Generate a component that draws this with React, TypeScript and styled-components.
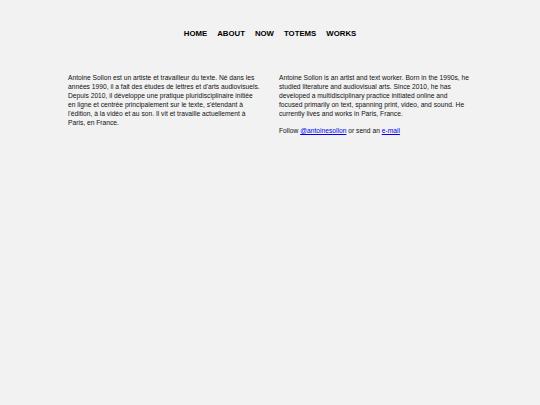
import React from 'react';
import styled, { createGlobalStyle } from 'styled-components';

const GlobalStyle = createGlobalStyle`
  html, body {
    margin: 0;
    padding: 0;
    background: #f2f2f2;
  }
  body {
    font-family: "Liberation Sans", Arial, sans-serif;
    color: #111;
  }
`;

const Page = styled.div`
  min-height: 405px;
  padding-top: 29px;
  box-sizing: border-box;
`;

const Nav = styled.nav`
  display: flex;
  justify-content: center;
  gap: 10px;
`;

const NavItem = styled.a`
  font-size: 7.8px;
  font-weight: bold;
  color: #000;
  text-decoration: none;
  line-height: 10px;
`;

const Columns = styled.main`
  display: grid;
  grid-template-columns: 192px 192px;
  column-gap: 19px;
  margin: 34px 0 0 68px;
`;

const Column = styled.section`
  font-size: 6.7px;
  line-height: 9px;
`;

const Paragraph = styled.p`
  margin: 0 0 8px;
`;

const Link = styled.a`
  color: #0000ee;
  text-decoration: underline;
`;

const links = ['HOME', 'ABOUT', 'NOW', 'TOTEMS', 'WORKS'];

export default function App() {
  return (
    <Page>
      <GlobalStyle />
      <Nav>
        {links.map((label) => (
          <NavItem key={label} href="#">
            {label}
          </NavItem>
        ))}
      </Nav>
      <Columns>
        <Column lang="fr">
          <Paragraph>
            Antoine Sollon est un artiste et travailleur du texte. Né dans les années 1990, il a fait
            des études de lettres et d'arts audiovisuels. Depuis 2010, il développe une pratique
            pluridisciplinaire initiée en ligne et centrée principalement sur le texte, s'étendant à
            l'édition, à la vidéo et au son. Il vit et travaille actuellement à Paris, en France.
          </Paragraph>
        </Column>
        <Column lang="en">
          <Paragraph>
            Antoine Sollon is an artist and text worker. Born in the 1990s, he studied literature and
            audiovisual arts. Since 2010, he has developed a multidisciplinary practice initiated
            online and focused primarily on text, spanning print, video, and sound. He currently
            lives and works in Paris, France.
          </Paragraph>
          <Paragraph>
            Follow <Link href="#">@antoinesollon</Link> or send an <Link href="#">e-mail</Link>
          </Paragraph>
        </Column>
      </Columns>
    </Page>
  );
}
